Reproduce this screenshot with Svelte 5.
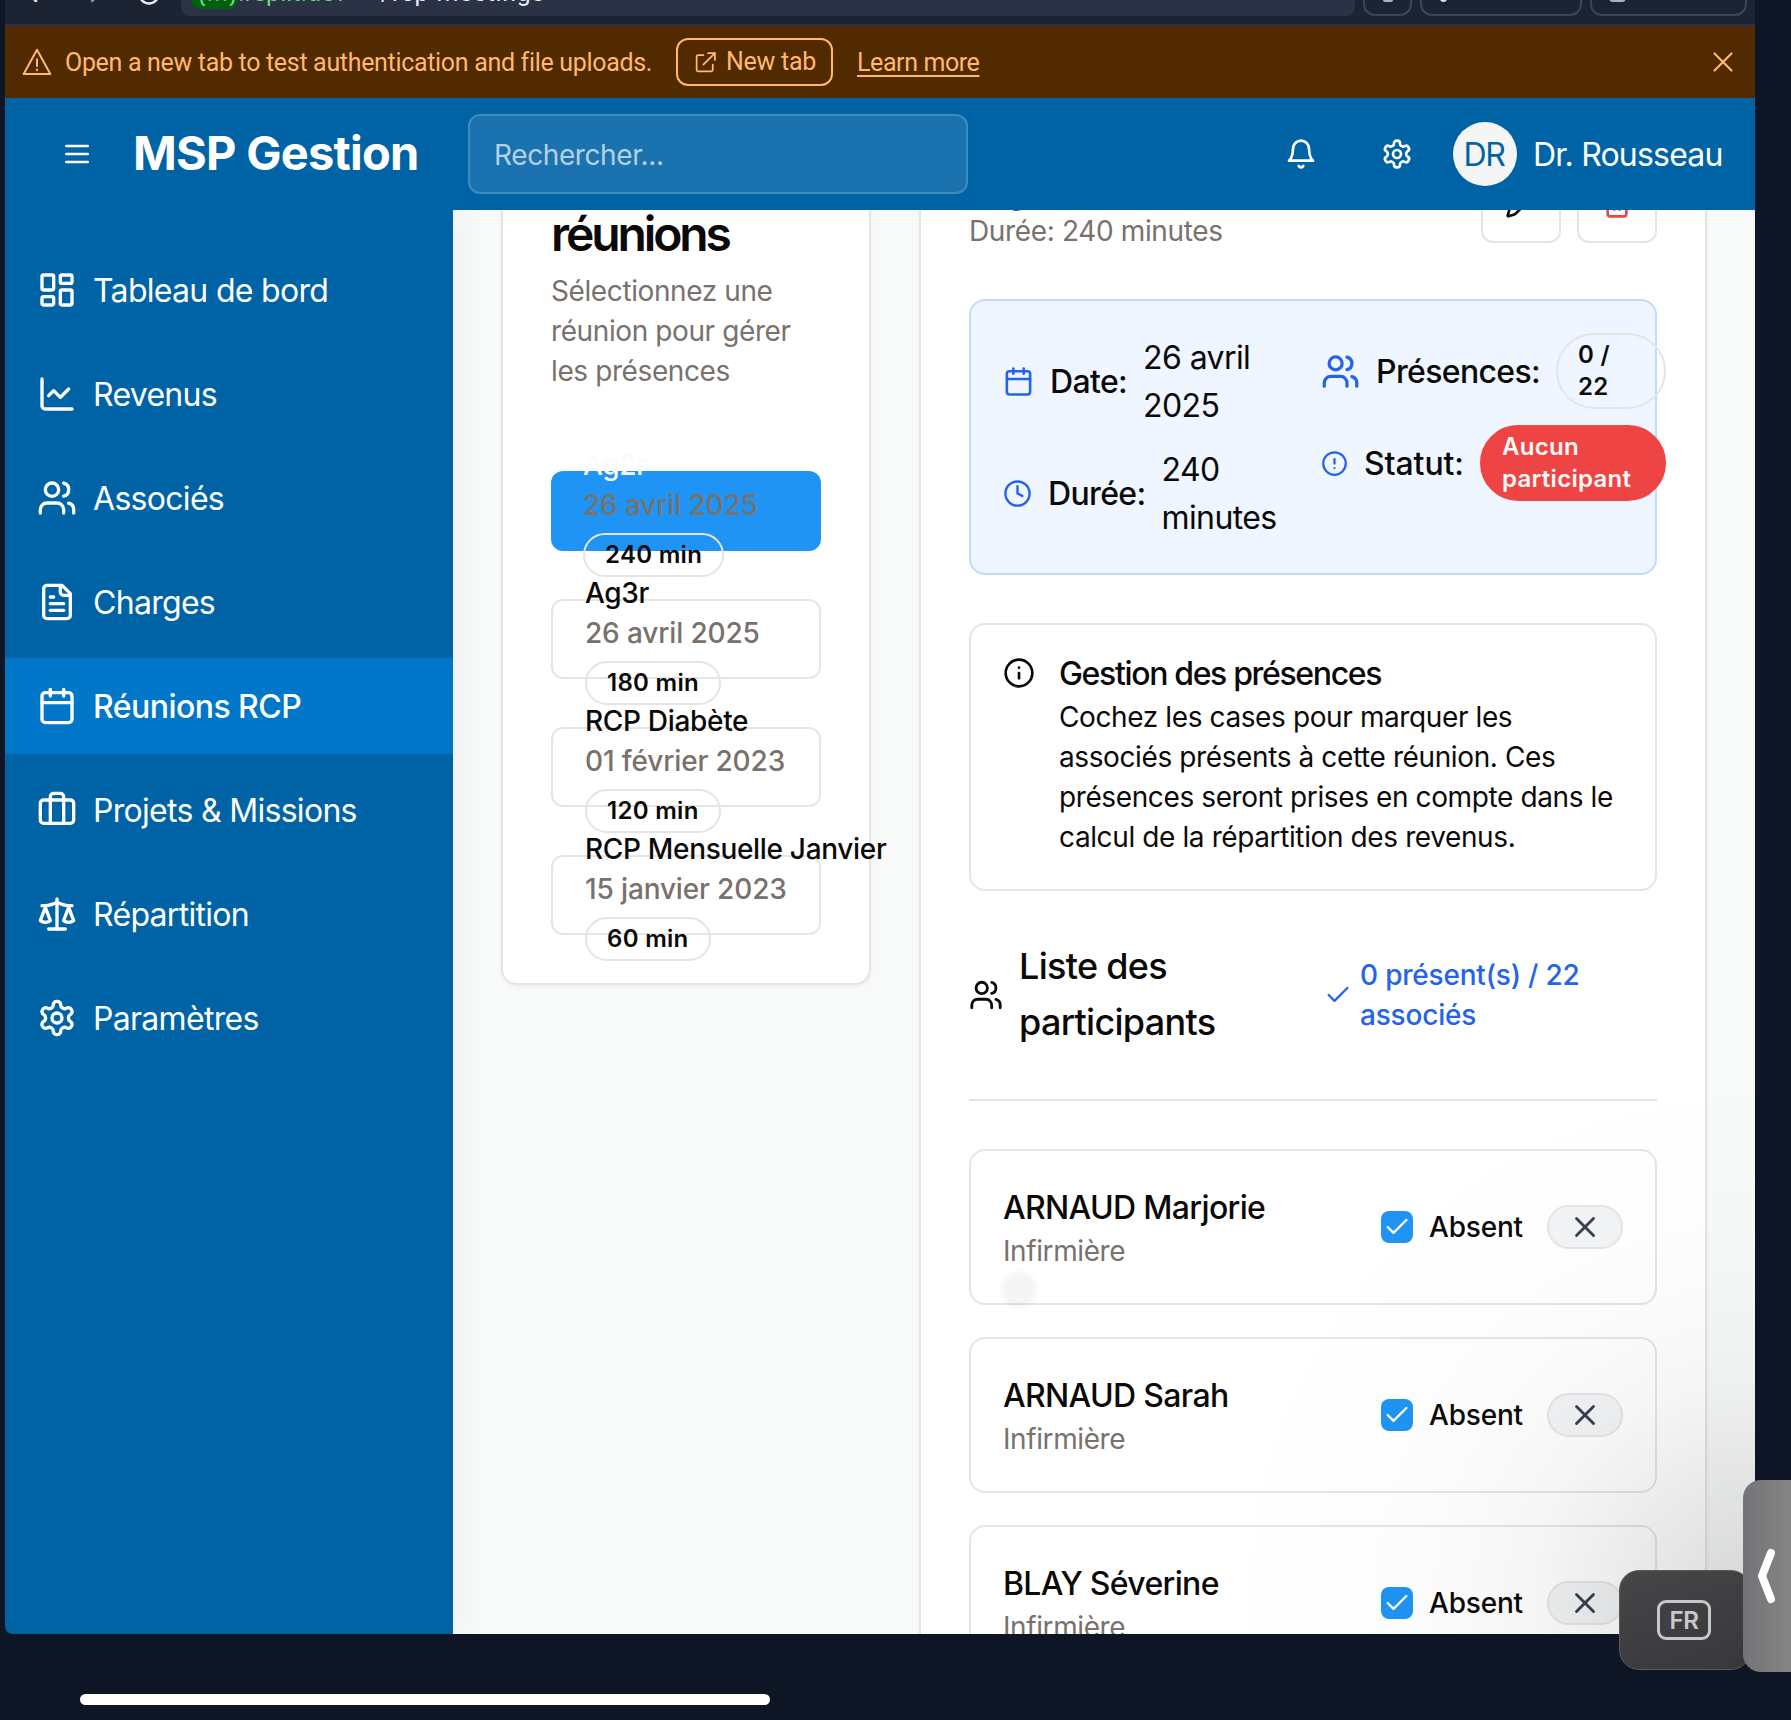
<script>
  const circle = (cx, cy, r) =>
    `M${cx - r} ${cy}a${r} ${r} 0 1 0 ${2 * r} 0a${r} ${r} 0 1 0 ${-2 * r} 0`;
  const rect = (x, y, w, h, r) =>
    `M${x + r} ${y}h${w - 2 * r}a${r} ${r} 0 0 1 ${r} ${r}v${h - 2 * r}a${r} ${r} 0 0 1 ${-r} ${r}h${2 * r - w}a${r} ${r} 0 0 1 ${-r} ${-r}v${2 * r - h}a${r} ${r} 0 0 1 ${r} ${-r}z`;

  const icons = {
    menu: ['M4 12h16', 'M4 6h16', 'M4 18h16'],
    dashboard: [rect(3, 3, 7, 9, 1), rect(14, 3, 7, 5, 1), rect(14, 12, 7, 9, 1), rect(3, 16, 7, 5, 1)],
    chart: ['M3 3v16a2 2 0 0 0 2 2h16', 'm19 9-5 5-4-4-3 3'],
    users: [
      'M16 21v-2a4 4 0 0 0-4-4H6a4 4 0 0 0-4 4v2',
      circle(9, 7, 4),
      'M22 21v-2a4 4 0 0 0-3-3.87',
      'M16 3.13a4 4 0 0 1 0 7.75'
    ],
    file: [
      'M15 2H6a2 2 0 0 0-2 2v16a2 2 0 0 0 2 2h12a2 2 0 0 0 2-2V7Z',
      'M14 2v4a2 2 0 0 0 2 2h4',
      'M10 9H8',
      'M16 13H8',
      'M16 17H8'
    ],
    calendar: ['M8 2v4', 'M16 2v4', rect(3, 4, 18, 18, 2), 'M3 10h18'],
    briefcase: ['M16 20V4a2 2 0 0 0-2-2h-4a2 2 0 0 0-2 2v16', rect(2, 6, 20, 14, 2)],
    scale: [
      'm16 16 3-8 3 8c-.87.65-1.92 1-3 1s-2.13-.35-3-1Z',
      'm2 16 3-8 3 8c-.87.65-1.92 1-3 1s-2.13-.35-3-1Z',
      'M7 21h10',
      'M12 3v18',
      'M3 7h2c2 0 5-1 7-2 2 1 5 2 7 2h2'
    ],
    settings: [
      'M12.22 2h-.44a2 2 0 0 0-2 2v.18a2 2 0 0 1-1 1.73l-.43.25a2 2 0 0 1-2 0l-.15-.08a2 2 0 0 0-2.73.73l-.22.38a2 2 0 0 0 .73 2.73l.15.1a2 2 0 0 1 1 1.72v.51a2 2 0 0 1-1 1.74l-.15.09a2 2 0 0 0-.73 2.73l.22.38a2 2 0 0 0 2.73.73l.15-.08a2 2 0 0 1 2 0l.43.25a2 2 0 0 1 1 1.73V20a2 2 0 0 0 2 2h.44a2 2 0 0 0 2-2v-.18a2 2 0 0 1 1-1.73l.43-.25a2 2 0 0 1 2 0l.15.08a2 2 0 0 0 2.73-.73l.22-.39a2 2 0 0 0-.73-2.73l-.15-.08a2 2 0 0 1-1-1.74v-.5a2 2 0 0 1 1-1.74l.15-.09a2 2 0 0 0 .73-2.73l-.22-.38a2 2 0 0 0-2.73-.73l-.15.08a2 2 0 0 1-2 0l-.43-.25a2 2 0 0 1-1-1.73V4a2 2 0 0 0-2-2z',
      circle(12, 12, 3)
    ],
    bell: ['M6 8a6 6 0 0 1 12 0c0 7 3 9 3 9H3s3-2 3-9', 'M10.3 21a1.94 1.94 0 0 0 3.4 0'],
    clock: [circle(12, 12, 10), 'M12 6v6l4 2'],
    alert: [circle(12, 12, 10), 'M12 8v4', 'M12 16h.01'],
    info: [circle(12, 12, 10), 'M12 16v-4', 'M12 8h.01'],
    check: ['M20 6 9 17l-5-5'],
    x: ['M18 6 6 18', 'm6 6 12 12'],
    pencil: [
      'M21.17 6.81a1 1 0 0 0-3.99-3.99L3.84 16.17a2 2 0 0 0-.5.83l-1.32 4.35a.5.5 0 0 0 .62.62l4.36-1.32a2 2 0 0 0 .83-.5z',
      'm15 5 4 4'
    ],
    trash: ['M3 6h18', 'M19 6v14a2 2 0 0 1-2 2H7a2 2 0 0 1-2-2V6', 'M8 6V4a2 2 0 0 1 2-2h4a2 2 0 0 1 2 2v2', 'M10 11v6', 'M14 11v6'],
    warning: ['M12 2.8 22 21H2z', 'M12 10v5', 'M12 17.6v.6'],
    external: ['M10 5H5a1.5 1.5 0 0 0-1.5 1.5V19A1.5 1.5 0 0 0 5 20.500h12.500A1.500 1.500 0 0 0 19 19v-5', 'M14.500 3H21v6.500', 'M21 3 10 14']
  };

  const nav = [
    { icon: 'dashboard', label: 'Tableau de bord' },
    { icon: 'chart', label: 'Revenus' },
    { icon: 'users', label: 'Associés' },
    { icon: 'file', label: 'Charges' },
    { icon: 'calendar', label: 'Réunions RCP', active: true },
    { icon: 'briefcase', label: 'Projets & Missions' },
    { icon: 'scale', label: 'Répartition' },
    { icon: 'settings', label: 'Paramètres' }
  ];

  const meetings = [
    { name: 'Ag2r', date: '26 avril 2025', length: '240 min', active: true },
    { name: 'Ag3r', date: '26 avril 2025', length: '180 min' },
    { name: 'RCP Diabète', date: '01 février 2023', length: '120 min' },
    { name: 'RCP Mensuelle Janvier', date: '15 janvier 2023', length: '60 min' }
  ];

  const people = [
    { name: 'ARNAUD Marjorie', role: 'Infirmière' },
    { name: 'ARNAUD Sarah', role: 'Infirmière' },
    { name: 'BLAY Séverine', role: 'Infirmière' }
  ];
</script>

{#snippet icon(name, size, weight = 2)}
  <svg width={size} height={size} viewBox="0 0 24 24" fill="none" stroke="currentColor" stroke-width={weight} stroke-linecap="round" stroke-linejoin="round" aria-hidden="true">
    {#each icons[name] as d}<path {d} />{/each}
  </svg>
{/snippet}

<div class="screen">
  <div class="window">
    <div class="browser">
      <div class="browser-nav">
        <svg width="160" height="34" viewBox="0 0 160 34" fill="none" stroke="#e8ecf4" stroke-width="2.500" stroke-linecap="round">
          <path d="M31 10 22 18.500l9 8.500" />
          <path d="M87 10 96 18.500 87 27" stroke="#8b93a8" />
          <circle cx="144" cy="20" r="9.500" />
        </svg>
      </div>
      <div class="url"><span class="host">{'{...}'}</span><span class="domain">.replit.dev</span><span class="path">/rcp-meetings</span></div>
      <div class="tool small"><i class="knob"></i></div>
      <div class="tool mid"><i class="dot"></i><span>DevTools</span></div>
      <div class="tool wide"><i class="knob big"></i><span>New tab</span></div>
    </div>

    <div class="banner">
      {@render icon('warning', 32, 1.5)}
      <span class="msg">Open a new tab to test authentication and file uploads.</span>
      <button class="newtab">{@render icon('external', 25, 1.7)}<span>New tab</span></button>
      <span class="learn">Learn more</span>
      <span class="close">{@render icon('x', 34, 1.5)}</span>
    </div>

    <header class="topbar">
      <span class="burger">{@render icon('menu', 32, 2)}</span>
      <h1>MSP Gestion</h1>
      <div class="search">Rechercher...</div>
      <div class="account">
        <span class="bell">{@render icon('bell', 32)}</span>
        <span class="gear">{@render icon('settings', 32)}</span>
        <span class="avatar">DR</span>
        <span class="user">Dr. Rousseau</span>
      </div>
    </header>

    <div class="body">
      <nav>
        {#each nav as item}
          <div class="nav-item" class:active={item.active}>{@render icon(item.icon, 40)}<span>{item.label}</span></div>
        {/each}
      </nav>

      <main>
        <section class="card list">
          <h2>Liste des réunions</h2>
          <p class="desc">Sélectionnez une réunion pour gérer les présences</p>
          <div class="meetings">
            {#each meetings as m}
              <div class="meeting" class:selected={m.active}>
                <span class="name">{m.name}</span>
                <span class="date">{m.date}</span>
                <span class="badge">{m.length}</span>
              </div>
            {/each}
          </div>
        </section>

        <section class="card detail">
          <div class="detail-head">
            <div>
              <h2>Ag2r</h2>
              <p class="length">Durée: 240 minutes</p>
            </div>
            <div class="actions">
              <button>{@render icon('pencil', 32)}</button>
              <button class="danger">{@render icon('trash', 32)}</button>
            </div>
          </div>

          <div class="summary">
            <div class="col">
              <div class="fact tall">{@render icon('calendar', 31)}<b>Date:</b><span>26 avril<br />2025</span></div>
              <div class="fact tall">{@render icon('clock', 29)}<b>Durée:</b><span>240<br />minutes</span></div>
            </div>
            <div class="col">
              <div class="fact">{@render icon('users', 39)}<b>Présences:</b><span class="badge count">0 /<br />22</span></div>
              <div class="fact state">{@render icon('alert', 27)}<b>Statut:</b><span class="badge status">Aucun<br />participant</span></div>
            </div>
          </div>

          <div class="notice">
            {@render icon('info', 32)}
            <div>
              <h3>Gestion des présences</h3>
              <p>Cochez les cases pour marquer les<br />associés présents à cette réunion. Ces<br />présences seront prises en compte dans le<br />calcul de la répartition des revenus.</p>
            </div>
          </div>

          <div class="people-head">
            {@render icon('users', 34)}
            <h3>Liste des<br />participants</h3>
            <div class="present">{@render icon('check', 28)}<span>0 présent(s) / 22<br />associés</span></div>
          </div>
          <hr />

          <div class="people">
            {#each people as p}
              <div class="person">
                <div class="who"><span class="pname">{p.name}</span><span class="role">{p.role}</span></div>
                <span class="box">{@render icon('check', 28)}</span>
                <span class="absent">Absent</span>
                <span class="mark">{@render icon('x', 34)}</span>
              </div>
            {/each}
          </div>
        </section>
        <i class="touch"></i>
        <i class="shade"></i>
      </main>
    </div>
  </div>

  <div class="home-bar"></div>
  <div class="keyboard"><span>FR</span></div>
  <div class="handle">
    <svg width="48" height="192" viewBox="0 0 48 192" fill="none" stroke="#fff" stroke-width="8" stroke-linecap="round" stroke-linejoin="round"><path d="M28 73 19 96l9 23" /></svg>
  </div>
</div>

<style>
  :global(body) { margin: 0; background: #0e1525; }
  * { box-sizing: border-box; }
  svg { flex: none; display: block; }
  h1, h2, h3, p { margin: 0; }
  button { font: inherit; letter-spacing: inherit; color: inherit; background: none; padding: 0; }

  .screen {
    position: relative; width: 1791px; height: 1720px; overflow: hidden;
    background: #0e1525; padding-left: 5px; color: #0c0a09;
    font-family: Inter, "Liberation Sans", sans-serif; font-size: 32px; line-height: 48px;
  }
  .window { width: 1750px; height: 1634px; overflow: hidden; display: flex; flex-direction: column; border-bottom-left-radius: 8px; }

  .browser {
    flex: none; height: 26px; background: #1c2333; border-bottom: 2px solid #2b3245; overflow: hidden;
    display: flex; align-items: flex-start; font-family: Roboto, "Liberation Sans", sans-serif; font-size: 25px;
  }
  .browser > * { flex: none; margin-top: -24px; height: 40px; }
  .browser-nav { width: 176px; }
  .browser-nav svg { margin-top: -2px; }
  .url { width: 1174px; background: #2b3245; border-radius: 8px; display: flex; align-items: flex-start; padding-left: 10px; color: #e8ecf4; line-height: 34px; }
  .host { background: #00600f; color: #6cd97e; border-radius: 8px; height: 33px; width: 46px; padding-left: 6px; letter-spacing: 1px; }
  .domain { color: #6cd97e; width: 144px; padding-left: 1px; }
  .path { letter-spacing: .6px; }
  .tool { border: 2px solid #3c445c; border-radius: 12px; margin-left: 8px; display: flex; color: #aab1bf; font-size: 24px; line-height: 28px; }
  .small { width: 49px; justify-content: center; }
  .mid { width: 162px; padding-left: 18px; gap: 20px; }
  .wide { width: 157px; padding-left: 17px; gap: 18px; }
  .knob { width: 10px; height: 24px; background: #aab1bf; border-radius: 2px; }
  .knob.big { width: 17px; border-radius: 4px; }
  .dot { width: 7px; height: 24px; background: #e0e4ec; border-radius: 4px; }

  .banner {
    flex: none; height: 72px; background: #522a00; color: #ffb870; display: flex; align-items: center; padding: 0 15px 0 16px;
    font-family: Roboto, "Liberation Sans", sans-serif; font-size: 25px; line-height: 32px; letter-spacing: -.32px;
  }
  .msg { width: 611px; margin-left: 12px; padding-top: 1px; white-space: nowrap; }
  .newtab { width: 157px; height: 48px; border: 2px solid #ffb870; border-radius: 12px; display: flex; align-items: center; gap: 8px; padding-left: 15px; letter-spacing: -.25px; }
  .learn { margin-left: 24px; padding-top: 1px; letter-spacing: -.4px; text-decoration: underline; text-underline-offset: 4px; text-decoration-thickness: 2px; }
  .close { margin-left: auto; }

  .topbar { position: relative; z-index: 2; flex: none; height: 112px; background: #0063a6; color: #fff; display: flex; align-items: center; padding: 0 33px 0 56px; }
  h1 { margin: -2px 0 0 40px; width: 335px; font-size: 47px; font-weight: 700; letter-spacing: -.75px; white-space: nowrap; }
  .search { width: 500px; height: 80px; border: 2px solid #408abc; border-radius: 12px; background: #1a73af; color: #b3d0e4; font-size: 28px; line-height: 78px; letter-spacing: -.4px; padding-left: 24px; }
  .account { margin-left: auto; display: flex; align-items: center; }
  .bell { margin-right: 64px; }
  .gear { margin-right: 40px; }
  .avatar { width: 64px; height: 64px; border-radius: 50%; background: #f5f5f5; color: #0063a6; display: grid; place-items: center; letter-spacing: -1.4px; padding: 2px 2px 0 0; }
  .user { margin-left: 16px; width: 189px; white-space: nowrap; letter-spacing: -.8px; padding-top: 2px; }

  .body { flex: 1; min-height: 0; display: flex; }
  nav { position: relative; z-index: 1; flex: none; width: 448px; background: #0063a6; color: #fff; padding-top: 32px; display: flex; flex-direction: column; gap: 8px; box-shadow: 0 0 30px rgba(60, 60, 140, .08); }
  .nav-item { height: 96px; display: flex; align-items: center; gap: 16px; padding-left: 32px; letter-spacing: -.7px; }
  .nav-item span { padding-top: 2px; }
  .nav-item.active { background: #0077c8; font-weight: 500; letter-spacing: -.55px; }

  main { position: relative; flex: 1; overflow: hidden; background: #f8faf9; display: flex; align-items: flex-start; gap: 48px; padding: 0 48px; }
  .card { flex: none; margin-top: -98px; background: #fff; border: 2px solid #e7e5e4; border-radius: 16px; padding: 48px; box-shadow: 0 2px 4px rgba(0, 0, 0, .05); }
  .list { width: 370px; }
  .detail { width: 788px; }
  h2 { font-size: 48px; line-height: 48px; font-weight: 600; letter-spacing: -3.1px; }
  .desc { margin-top: 13px; font-size: 28px; line-height: 40px; letter-spacing: -.4px; color: #78716c; }
  .meetings { margin-top: 80px; display: flex; flex-direction: column; gap: 48px; }
  .meeting { height: 80px; border: 2px solid #e7e5e4; border-radius: 12px; padding-left: 32px; display: flex; flex-direction: column; justify-content: center; align-items: flex-start; font-size: 28px; font-weight: 500; line-height: 40px; white-space: nowrap; }
  .meeting > * { flex: none; }
  .name { letter-spacing: -.32px; }
  .selected { background: #1f94f4; border: 0; color: #fafaff; }
  .date { color: #78716c; letter-spacing: -.14px; }
  .badge { border: 2px solid #e7e5e4; border-radius: 38px; padding: 4px 20px; font-size: 24px; line-height: 32px; font-weight: 600; letter-spacing: .3px; color: #0c0a09; }
  .meeting .badge { margin-top: 8px; }

  .detail-head { display: flex; justify-content: space-between; align-items: flex-start; height: 88px; }
  .detail-head h2 { margin-top: -3px; letter-spacing: -1.5px; }
  .length { margin-top: 4px; font-size: 28px; line-height: 40px; letter-spacing: -.36px; color: #78716c; }
  .actions { display: flex; gap: 16px; }
  .actions button { width: 80px; height: 80px; border: 2px solid #e7e5e4; border-radius: 12px; display: grid; place-items: center; margin-top: 1px; }
  .danger { color: #ef4444; }

  .summary { margin-top: 49px; height: 276px; border: 2px solid #bfdbfe; border-radius: 16px; background: #eff6ff; padding: 32px; display: grid; grid-template-columns: 1fr 1fr; gap: 16px; }
  .col { display: flex; flex-direction: column; gap: 16px; min-width: 0; }
  .fact { height: 76px; display: flex; align-items: center; gap: 16px; white-space: nowrap; letter-spacing: -.6px; }
  .fact.tall { height: 96px; }
  .fact svg { color: #2563eb; }
  .fact b { font-weight: 500; padding-top: 2px; letter-spacing: -.65px; }
  .fact.state b { letter-spacing: -.1px; }
  .tall span { padding-top: 2px; }
  .count { flex: none; width: 110px; }
  .status { flex: none; width: 186px; background: #ef4444; border-color: #ef4444; color: #fafafa; }

  .notice { margin-top: 48px; height: 268px; border: 2px solid #e7e5e4; border-radius: 16px; padding: 32px; display: flex; gap: 24px; }
  .notice h3 { font-size: 32px; line-height: 34px; height: 32px; font-weight: 500; letter-spacing: -1.35px; }
  .notice p { margin-top: 8px; font-size: 28px; line-height: 40px; letter-spacing: -.39px; white-space: nowrap; }

  .people-head { margin-top: 48px; height: 112px; display: flex; align-items: center; gap: 16px; }
  .people-head h3 { width: 289px; margin-top: -2px; font-size: 36px; line-height: 56px; font-weight: 500; letter-spacing: -.7px; }
  .present { display: flex; align-items: center; gap: 8px; font-size: 28px; line-height: 40px; font-weight: 500; letter-spacing: -.2px; color: #2563eb; white-space: nowrap; }
  hr { margin: 48px 0; border: 0; height: 2px; background: #e5e5e5; }

  .people { display: flex; flex-direction: column; gap: 32px; }
  .person { height: 156px; border: 2px solid #e7e5e4; border-radius: 16px; padding: 0 32px; display: flex; align-items: center; }
  .who { width: 378px; display: flex; flex-direction: column; }
  .pname { font-weight: 500; letter-spacing: -.67px; height: 48px; padding-top: 1px; }
  .role { font-size: 28px; line-height: 40px; letter-spacing: -.4px; color: #78716c; }
  .box { width: 32px; height: 32px; border-radius: 8px; background: #1f94f4; color: #fff; display: grid; place-items: center; }
  .absent { margin-left: 16px; font-size: 28px; font-weight: 500; letter-spacing: -.2px; }
  .mark { margin-left: auto; width: 76px; height: 44px; border: 2px solid #e5e5e5; border-radius: 22px; background: #f3f4f6; color: #374151; display: grid; place-items: center; }

  .touch { position: absolute; left: 548px; top: 1062px; width: 36px; height: 36px; border-radius: 50%; background: rgba(0, 0, 0, .04); filter: blur(2px); }
  .shade { position: absolute; right: 0; bottom: 0; width: 700px; height: 700px; background: radial-gradient(circle at 700px 670px, rgba(0, 0, 0, .14), rgba(0, 0, 0, .085) 120px, rgba(0, 0, 0, .035) 230px, rgba(0, 0, 0, .012) 350px, transparent 540px); }

  .home-bar { width: 690px; height: 11px; margin: 60px 0 0 75px; border-radius: 6px; background: #fff; }
  .keyboard { position: absolute; left: 1619px; top: 1570px; width: 132px; height: 100px; border-radius: 20px; border: 1px solid #5a5a5c; background: linear-gradient(160deg, #464648, #38383a); display: flex; align-items: center; padding-left: 37px; }
  .keyboard span { width: 54px; height: 40px; border: 3px solid #c8c8ca; border-radius: 9px; color: #c8c8ca; font-size: 24px; font-weight: 600; line-height: 35px; letter-spacing: -.5px; text-align: center; }
  .handle { position: absolute; left: 1743px; top: 1480px; width: 48px; height: 192px; border-radius: 18px 0 0 18px; background: linear-gradient(90deg, #737477, #848484); }
</style>
